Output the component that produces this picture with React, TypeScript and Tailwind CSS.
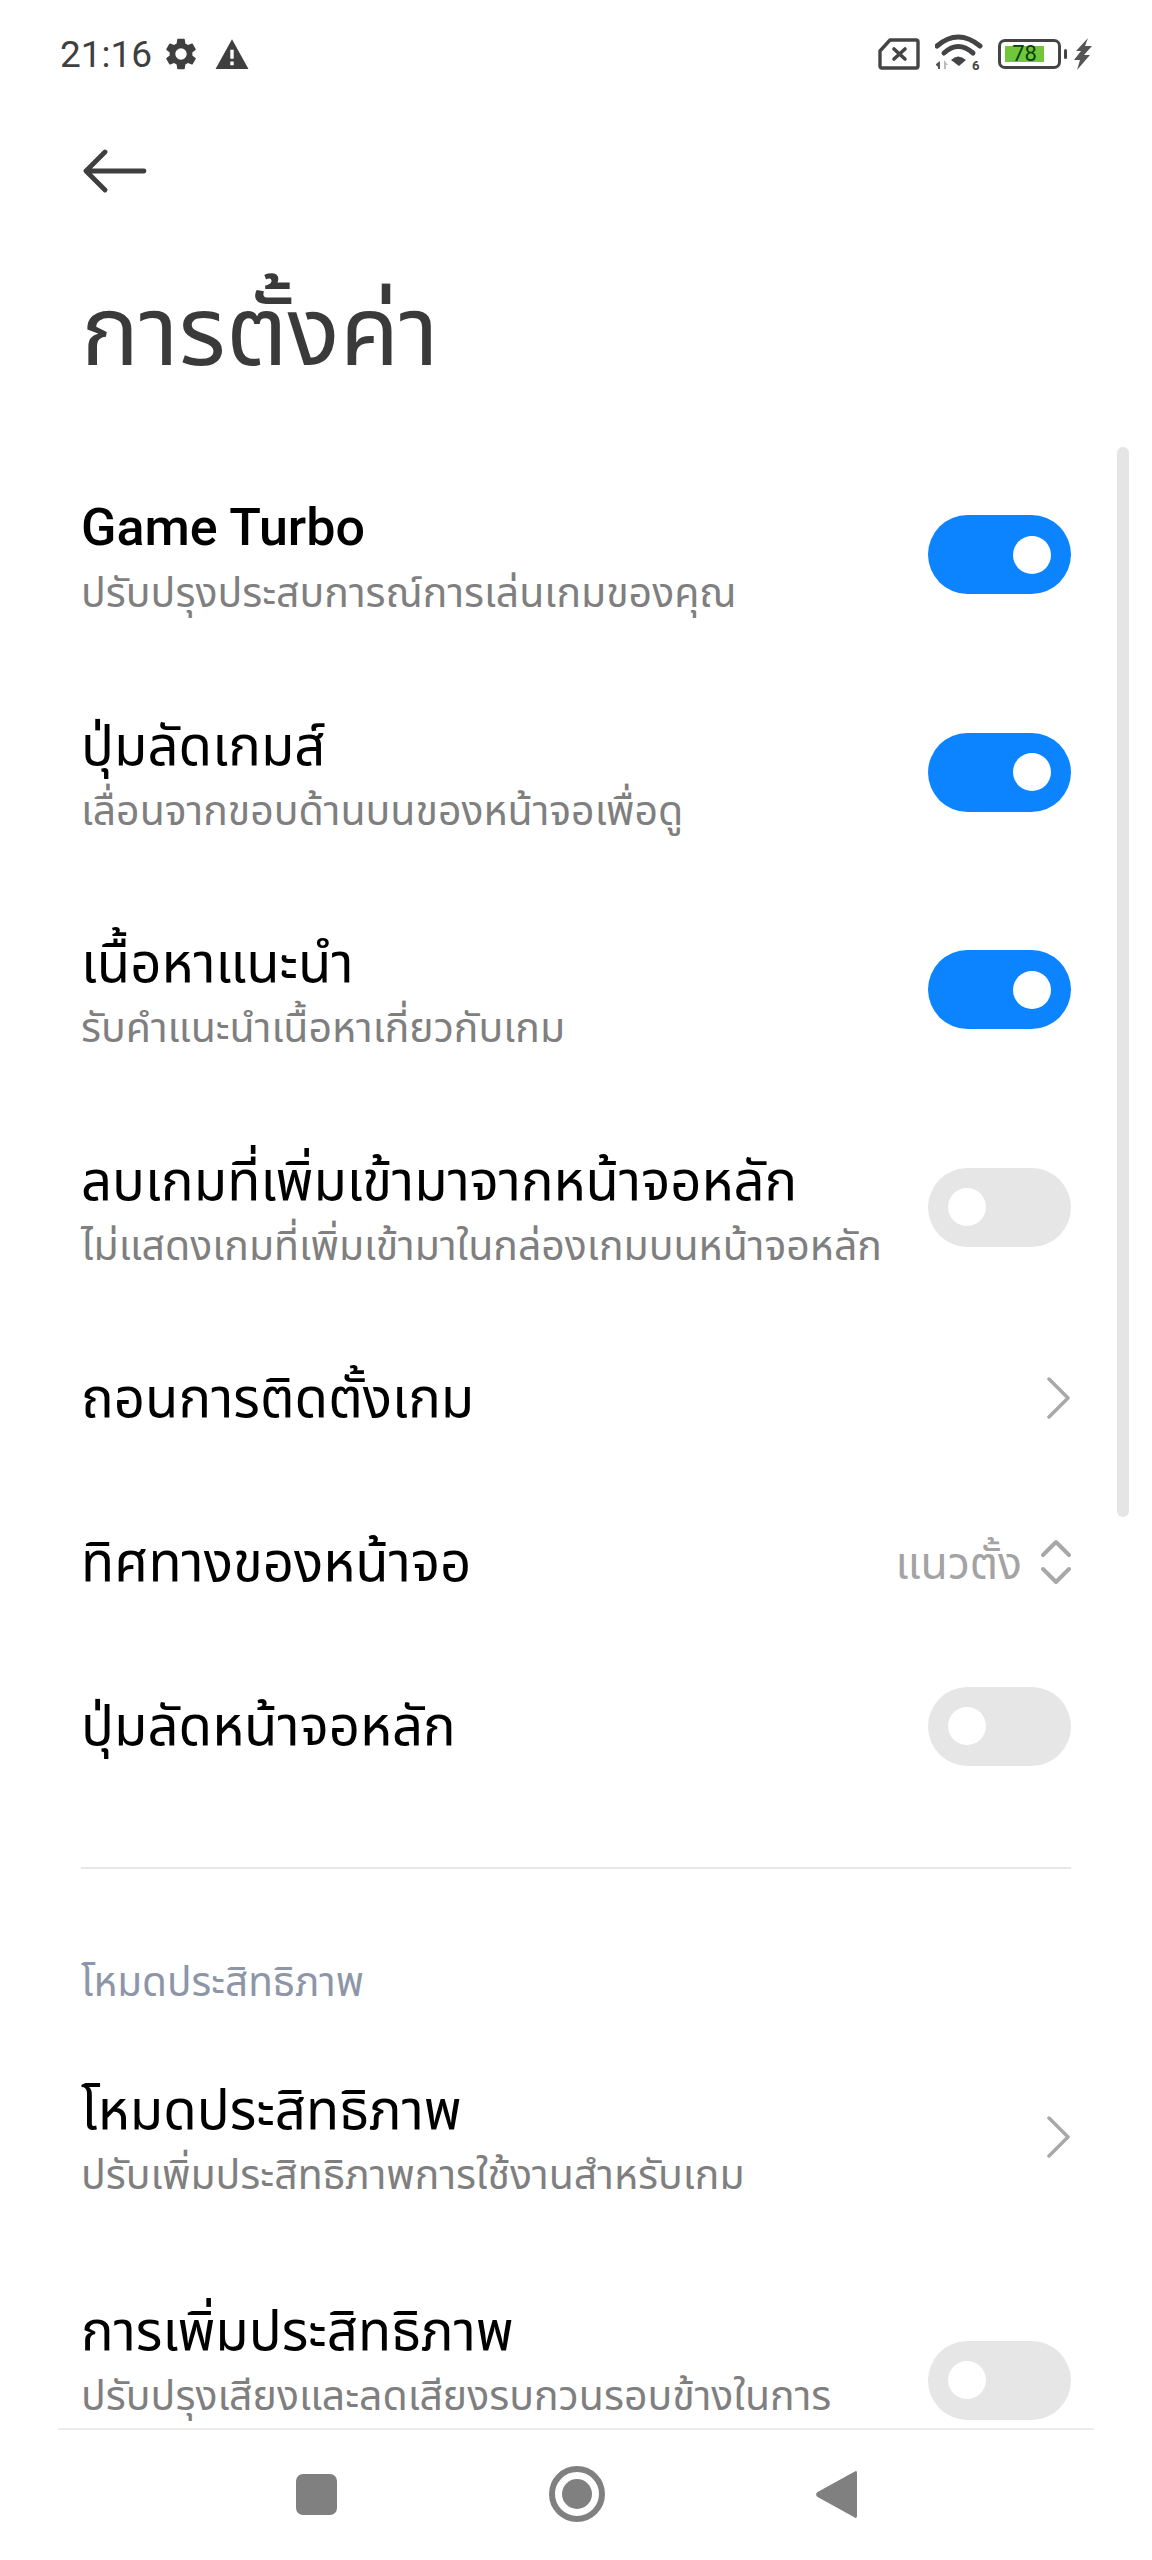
const font = { fontFamily: '"Roboto","Noto Sans","Noto Sans Thai","Noto Sans CJK SC",sans-serif' };

function Toggle({ on }: { on: boolean }) {
  return (
    <div className={`flex h-[79px] w-[143px] shrink-0 items-center rounded-full ${on ? "justify-end bg-[#0d84ff] pr-[20px]" : "justify-start bg-[#e6e6e6] pl-[20px]"}`}>
      <div className="h-[38px] w-[38px] rounded-full bg-white" />
    </div>
  );
}

function Chevron() {
  return (
    <svg width="24" height="42" viewBox="0 0 24 42" fill="none" stroke="#a8a8a8" strokeWidth="3.5" strokeLinecap="round" strokeLinejoin="round">
      <path d="M2 2 L21 21 L2 40" />
    </svg>
  );
}

function Row({ title, sub, right, medium, tall, h = "h-[217.5px]" }: { title: string; sub?: string; right: React.ReactNode; medium?: boolean; tall?: boolean; h?: string }) {
  return (
    <div className={`flex ${h} items-center justify-between`}>
      <div className={`min-w-0 ${sub ? "pt-[5px]" : ""}`}>
        <div className={`whitespace-nowrap leading-[60px] text-black ${medium ? "text-[52px] font-medium" : "text-[54.5px]"}`}>{title}</div>
        {sub && <div className={`mt-[12px] whitespace-nowrap text-[41px] leading-[46px] text-[#7f7f7f] ${tall ? "h-[92px]" : ""}`}>{sub}</div>}
      </div>
      {right}
    </div>
  );
}

function StatusBar() {
  return (
    <div className="flex h-[108px] shrink-0 items-center justify-between pl-[60px] pr-[60px]">
      <div className="flex items-center text-[#3f3f3f]">
        <span className="text-[37px] leading-none">21:16</span>
        <svg width="38" height="38" viewBox="0 0 24 24" fill="#3f3f3f" className="ml-[10px]">
          <path d="M19.14 12.94c.04-.3.06-.61.06-.94 0-.32-.02-.64-.07-.94l2.03-1.58a.49.49 0 0 0 .12-.61l-1.92-3.32a.49.49 0 0 0-.59-.22l-2.39.96c-.5-.38-1.03-.7-1.62-.94l-.36-2.54a.48.48 0 0 0-.48-.41h-3.84a.48.48 0 0 0-.47.41l-.36 2.54c-.59.24-1.13.57-1.62.94l-2.39-.96a.49.49 0 0 0-.59.22L2.74 8.87a.48.48 0 0 0 .12.61l2.03 1.58c-.05.3-.09.63-.09.94s.02.64.07.94l-2.03 1.58a.49.49 0 0 0-.12.61l1.92 3.32c.12.22.37.29.59.22l2.39-.96c.5.38 1.03.7 1.62.94l.36 2.54c.05.24.24.41.48.41h3.84c.24 0 .44-.17.47-.41l.36-2.54c.59-.24 1.13-.56 1.62-.94l2.39.96c.22.08.47 0 .59-.22l1.92-3.32a.48.48 0 0 0-.12-.61l-2.01-1.58zM12 15.6A3.6 3.6 0 1 1 12 8.4a3.6 3.6 0 0 1 0 7.2z" />
        </svg>
        <svg width="34" height="32" viewBox="0 0 32 30" className="ml-[15px]">
          <path fillRule="evenodd" fill="#3f3f3f" d="M16 1 L31.5 29 L0.5 29 Z M14.4 11 V19.5 H17.6 V11 Z M14.4 22 V25.5 H17.6 V22 Z" />
        </svg>
      </div>
      <div className="flex items-center">
        <svg width="42" height="32" viewBox="0 0 42 32" fill="none" stroke="#444" strokeWidth="3.4" strokeLinejoin="round">
          <path d="M12 2 H38 Q40 2 40 4 V28 Q40 30 38 30 H4 Q2 30 2 28 V13 Z" />
          <path d="M16 11 L27 21 M27 11 L16 21" strokeWidth="3.6" strokeLinecap="round" />
        </svg>
        <svg width="48" height="40" viewBox="0 0 48 40" fill="none" className="ml-[15px]">
          <path d="M2 12 Q23 -6 45 12" stroke="#444" strokeWidth="5" strokeLinecap="round" />
          <path d="M9 19 Q23 6 38 19" stroke="#444" strokeWidth="5" strokeLinecap="round" />
          <path d="M16 26 Q23 19 31 26 L24 32 Z" fill="#444" />
          <path d="M1 30 L5 27 V35 H3 V33 L1 31 Z" fill="#555" />
          <path d="M9 26 L13 31 H11 V35 H9 Z" fill="#bbb" />
          <text x="37" y="35.5" fontSize="13" fontWeight="700" fill="#444" style={{ fontFamily: "Roboto" }}>6</text>
        </svg>
        <div className="relative ml-[15px] flex h-[30px] w-[63px] items-center rounded-[7px] border-[3px] border-[#444] p-[4px]">
          <div className="flex h-full w-[39px] items-center justify-center bg-[#71c63c] text-[22px] leading-none text-[#0f3d0f]">78</div>
        </div>
        <div className="ml-[3px] h-[10px] w-[3px] rounded-full bg-[#444]" />
        <svg width="18" height="32" viewBox="0 0 18 32" fill="#555" className="ml-[7px]">
          <path d="M14 0 L2 13 H7 L0 22 H6 L3 32 L16 17 H10 L18 8 H11 Z" />
        </svg>
      </div>
    </div>
  );
}

function NavBar() {
  return (
    <div className="mx-[58px] flex h-[132px] shrink-0 items-center justify-center border-t-2 border-[#ececec] bg-white pb-[2px]">
      <div className="h-[41px] w-[41px] rounded-[7px] bg-[#808080]" />
      <div className="ml-[212px] flex h-[56px] w-[56px] items-center justify-center rounded-full border-[6px] border-[#808080]">
        <div className="h-[30px] w-[30px] rounded-full bg-[#808080]" />
      </div>
      <svg width="42" height="49" viewBox="0 0 38 46" preserveAspectRatio="none" fill="#808080" className="ml-[210px]">
        <path d="M36 1.5 Q38 0 38 3 V43 Q38 46 36 44.5 L2 25 Q0 23 2 21 Z" />
      </svg>
    </div>
  );
}

export default function App() {
  return (
    <div className="relative flex h-[2560px] w-[1152px] flex-col overflow-hidden bg-white" style={font}>
      <StatusBar />
      <div className="min-h-0 flex-1 overflow-hidden px-[81px]">
        <div className="flex h-[64px] items-end">
          <svg width="64" height="44" viewBox="0 0 64 44" fill="none" stroke="#3f3f3f" strokeWidth="4.8" strokeLinecap="round" strokeLinejoin="round" className="mb-[-21px] ml-[2px]">
            <path d="M22 3 L3 22 L22 41 M3 22 H61" />
          </svg>
        </div>
        <div className="mt-[112px] text-[97px] leading-[96px] text-[#3a3a3a]">การตั้งค่า</div>
        <div className="mt-[66px]">
          <Row medium title="Game Turbo" sub="ปรับปรุงประสบการณ์การเล่นเกมของคุณ" right={<Toggle on />} />
          <Row title="ปุ่มลัดเกมส์" sub="เลื่อนจากขอบด้านบนของหน้าจอเพื่อดู" right={<Toggle on />} />
          <Row title="เนื้อหาแนะนำ" sub="รับคำแนะนำเนื้อหาเกี่ยวกับเกม" right={<Toggle on />} />
          <Row title="ลบเกมที่เพิ่มเข้ามาจากหน้าจอหลัก" sub="ไม่แสดงเกมที่เพิ่มเข้ามาในกล่องเกมบนหน้าจอหลัก" right={<Toggle on={false} />} />
          <Row h="h-[164px]" title="ถอนการติดตั้งเกม" right={<Chevron />} />
          <Row
            h="h-[164px]"
            title="ทิศทางของหน้าจอ"
            right={
              <div className="flex items-center">
                <span className="pt-[5px] text-[44.5px] text-[#a3a3a3]">แนวตั้ง</span>
                <svg width="30" height="46" viewBox="0 0 30 46" fill="none" stroke="#a8a8a8" strokeWidth="4" strokeLinecap="round" strokeLinejoin="round" className="ml-[19px]">
                  <path d="M2 16 L15 3 L28 16 M2 30 L15 43 L28 30" />
                </svg>
              </div>
            }
          />
          <Row h="h-[164px]" title="ปุ่มลัดหน้าจอหลัก" right={<Toggle on={false} />} />
        </div>
        <div className="mt-[59px] h-[2px] bg-[#e6e8ea]" />
        <div className="mt-[90px] text-[40.5px] leading-[46px] text-[#8d96a8]">โหมดประสิทธิภาพ</div>
        <Row h="h-[217.5px] mt-[23px]" title="โหมดประสิทธิภาพ" sub="ปรับเพิ่มประสิทธิภาพการใช้งานสำหรับเกม" right={<Chevron />} />
        <Row tall h="h-[217.5px] mt-[26px]" title="การเพิ่มประสิทธิภาพ" sub="ปรับปรุงเสียงและลดเสียงรบกวนรอบข้างในการ" right={<Toggle on={false} />} />
      </div>
      <NavBar />
      <div className="absolute left-[1117px] top-[447px] h-[1070px] w-[12px] rounded-full bg-[#e5e5e5]" />
    </div>
  );
}
